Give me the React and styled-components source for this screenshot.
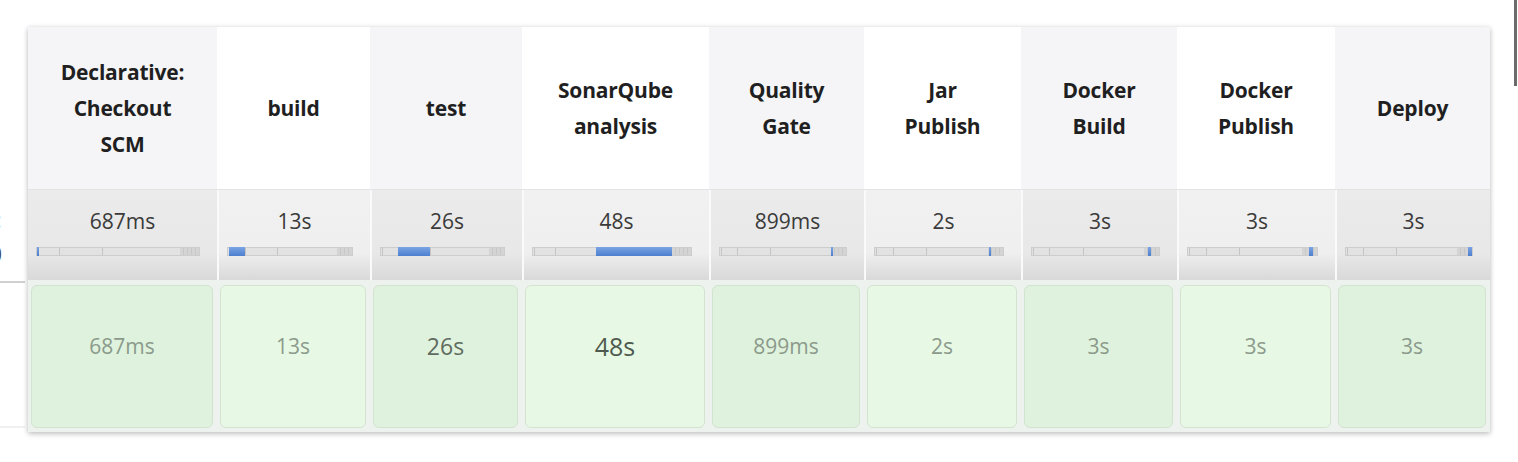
import React from 'react';
import styled, { createGlobalStyle } from 'styled-components';

const GlobalStyle = createGlobalStyle`
  html, body {
    margin: 0;
    padding: 0;
    background: #ffffff;
  }
  body {
    font-family: 'Open Sans', 'Noto Sans', sans-serif;
    color: #222;
  }
`;

const stages = [
  { name: ['Declarative:', 'Checkout', 'SCM'], time: '687ms', secs: 0.687, width: 189 },
  { name: ['build'], time: '13s', secs: 13, width: 153 },
  { name: ['test'], time: '26s', secs: 26, width: 152, tone: 'mid' },
  { name: ['SonarQube', 'analysis'], time: '48s', secs: 48, width: 187, tone: 'hot' },
  { name: ['Quality', 'Gate'], time: '899ms', secs: 0.899, width: 155 },
  { name: ['Jar', 'Publish'], time: '2s', secs: 2, width: 157 },
  { name: ['Docker', 'Build'], time: '3s', secs: 3, width: 156 },
  { name: ['Docker', 'Publish'], time: '3s', secs: 3, width: 158 },
  { name: ['Deploy'], time: '3s', secs: 3, width: 155 },
];

const total = stages.reduce((s, st) => s + st.secs, 0);
let acc = 0;
const spans = stages.map((st) => {
  const start = acc / total;
  acc += st.secs;
  return { start, size: st.secs / total };
});

const Page = styled.div`
  display: flex;
  align-items: flex-start;
  width: 1518px;
  height: 462px;
  overflow: hidden;
`;

const LeftStrip = styled.div`
  width: 28px;
  flex: none;
  padding-top: 203px;
  overflow: hidden;
  height: 259px;
`;

const Clipped = styled.div`
  margin-left: ${(p) => p.$shift}px;
  font-size: 21px;
  line-height: 34px;
  color: #444;
`;

const Rule = styled.div`
  margin-top: ${(p) => p.$top}px;
  width: 25px;
  height: 2px;
  background: ${(p) => p.$color};
`;

const Table = styled.div`
  margin-top: 27px;
  display: grid;
  grid-template-columns: ${(p) => p.$cols};
  grid-template-rows: 163px 90px 152px;
  background: #eef1ee;
  box-shadow: 0 1px 5px rgba(0, 0, 0, 0.22), 0 3px 6px rgba(0, 0, 0, 0.08);
  flex: none;
`;

const Head = styled.div`
  background: ${(p) => (p.$alt ? '#ffffff' : '#f5f5f7')};
  display: flex;
  flex-direction: column;
  align-items: center;
  justify-content: center;
  font-weight: 700;
  font-size: 21px;
  line-height: 36px;
  letter-spacing: -0.2px;
  color: #1f1f22;
  text-align: center;
  border-bottom: 1px solid #e3e3e6;
`;

const TimeCell = styled.div`
  background: linear-gradient(
    to bottom,
    ${(p) => (p.$alt ? '#f1f1f1' : '#ebebeb')} 0%,
    ${(p) => (p.$alt ? '#efefef' : '#e8e8e8')} 70%,
    #d9d9d9 100%
  );
  border-left: ${(p) => (p.$first ? 'none' : '2px solid #fafafa')};
  display: flex;
  flex-direction: column;
  align-items: center;
  padding: 16px 17px 0 8px;
`;

const TimeText = styled.div`
  font-size: 21px;
  line-height: 30px;
  color: #3a3a3a;
  margin-left: 9px;
`;

const Track = styled.div`
  margin-top: 11px;
  width: 100%;
  height: 9px;
  position: relative;
  background: #e2e2e2;
  border: 1px solid #cdcdcd;
  box-sizing: border-box;
`;

const Tick = styled.div`
  position: absolute;
  top: 0;
  bottom: 0;
  width: 1px;
  background: #c4c4c4;
`;

const Fill = styled.div`
  position: absolute;
  top: -1px;
  bottom: -1px;
  min-width: 2px;
  background: linear-gradient(to bottom, #7aa4e4, #4c7fcf);
`;

const Tail = styled.div`
  position: absolute;
  top: 0;
  bottom: 0;
  right: 0;
  background: repeating-linear-gradient(to right, #d4d4d4 0 3px, #c8c8c8 3px 4px);
`;

const BodyCell = styled.div`
  padding: 5px 4px 4px 3px;
  background: #eef2ee;
`;

const Box = styled.div`
  height: 100%;
  box-sizing: border-box;
  border: 1px solid #d2e4d0;
  border-radius: 6px;
  background: ${(p) => (p.$alt ? '#e7f8e4' : '#dff2dd')};
  display: flex;
  align-items: center;
  justify-content: center;
  font-size: ${(p) => (p.$tone === 'hot' ? '25px' : p.$tone === 'mid' ? '23px' : '21px')};
  color: ${(p) => (p.$tone === 'hot' ? '#4f5a4f' : p.$tone === 'mid' ? '#5f6b5f' : '#8b9a8b')};
  padding-bottom: 22px;
`;

const RightEdge = styled.div`
  margin-left: 24px;
  width: 3px;
  height: 86px;
  background: #6b6b6b;
  flex: none;
`;

const tailStart = spans[4].start;

const StageTrack = ({ span }) => (
  <Track>
    {spans.slice(1, 4).map((s, i) => (
      <Tick key={i} style={{ left: `${s.start * 100}%` }} />
    ))}
    <Tail style={{ width: `${(1 - tailStart) * 100}%` }} />
    <Fill style={{ left: `${span.start * 100}%`, width: `${span.size * 100}%` }} />
  </Track>
);

export default function App() {
  const cols = stages.map((s) => `${s.width}px`).join(' ');
  return (
    <>
      <GlobalStyle />
      <Page>
        <LeftStrip>
          <Clipped $shift={-4}>:</Clipped>
          <Clipped $shift={-10}>0</Clipped>
          <Rule $top={10} $color="#d0d0d0" />
          <Rule $top={143} $color="#f0f0f0" />
        </LeftStrip>
        <Table $cols={cols}>
          {stages.map((st, i) => (
            <Head key={`h${i}`} $alt={i % 2 === 1}>
              {st.name.map((line) => (
                <span key={line}>{line}</span>
              ))}
            </Head>
          ))}
          {stages.map((st, i) => (
            <TimeCell key={`t${i}`} $alt={i % 2 === 1} $first={i === 0}>
              <TimeText>{st.time}</TimeText>
              <StageTrack span={spans[i]} />
            </TimeCell>
          ))}
          {stages.map((st, i) => (
            <BodyCell key={`b${i}`}>
              <Box $alt={i % 2 === 1} $tone={st.tone}>
                {st.time}
              </Box>
            </BodyCell>
          ))}
        </Table>
        <RightEdge />
      </Page>
    </>
  );
}
